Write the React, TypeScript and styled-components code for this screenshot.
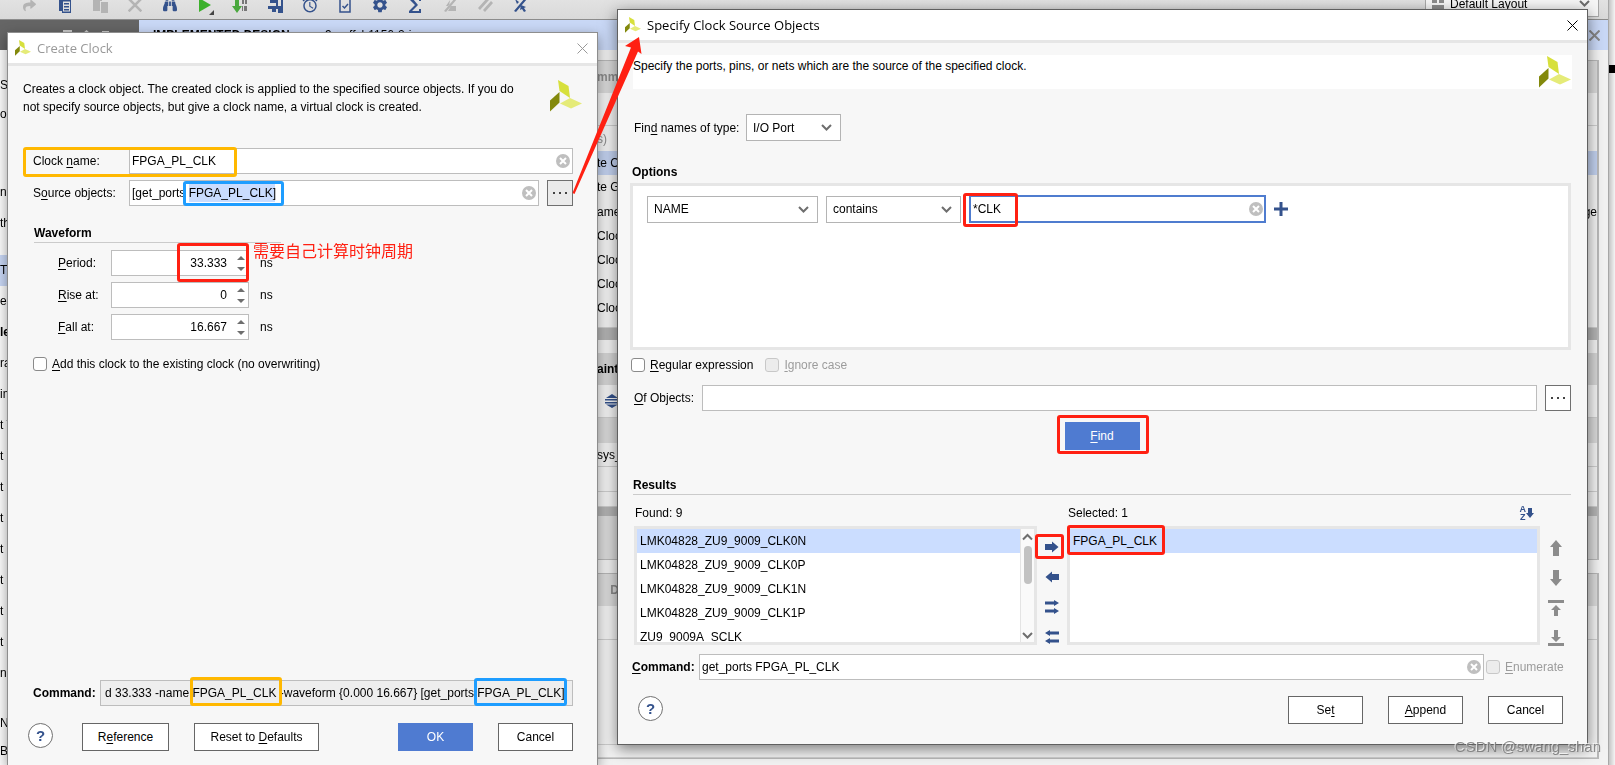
import React from 'react';
import styled, { createGlobalStyle, css } from 'styled-components';
import { FaBinoculars, FaShare, FaPlay } from 'react-icons/fa';
import { MdSettings, MdAlarm } from 'react-icons/md';

const RED = '#ff2012';
const YELLOW = '#ffb800';
const BLUE = '#1e9dff';
const NAVY = '#34528c';

const GlobalStyle = createGlobalStyle`
  * { box-sizing: border-box; }
  body {
    margin: 0;
    overflow: hidden;
    background: #fff;
    color: #000;
    font: 12px/18px "Liberation Sans", Arial, "Noto Sans CJK SC", sans-serif;
  }
  button, input, select { font: inherit; color: inherit; }
  u { text-decoration: underline; text-underline-offset: 2px; }
`;

/* ---------- application behind the dialogs ---------- */

const Screen = styled.main`
  position: relative;
  display: flex;
  height: 100vh;
  overflow: hidden;
`;

const AppWindow = styled.div`
  flex: 1;
  min-width: 0;
  display: flex;
  flex-direction: column;
  background: #f2f2f2;
  border-right: 1px solid #a8a8a8;
`;

const Toolbar = styled.div`
  display: flex;
  justify-content: space-between;
  height: 20px;
  background: linear-gradient(#e2e2e2, #d9d9d9);
  border-bottom: 1px solid #8c8c8c;
  overflow: hidden;
`;

const ToolIcons = styled.div`
  display: flex;
  align-items: center;
  height: 10px;
  padding-left: 12px;
`;

const ToolButton = styled.button<{ $color?: string }>`
  display: flex;
  align-items: center;
  justify-content: center;
  width: 35px;
  height: 24px;
  padding: 0;
  border: 0;
  background: none;
  color: ${(p) => p.$color || NAVY};
  svg { display: block; }
`;

const LayoutPicker = styled.div`
  display: flex;
  align-items: center;
  gap: 6px;
  width: 174px;
  height: 17px;
  margin-right: 9px;
  padding: 0 8px 8px 6px;
  border: solid #a8a8a8;
  border-width: 0 1px 1px;
  background: #f6f6f6;
  color: #8c8c8c;
  span { flex: 1; color: #000; }
`;

const Band = styled.div`
  display: flex;
  height: 30px;
`;

const BandDark = styled.div`
  display: flex;
  align-items: center;
  gap: 10px;
  width: 139px;
  padding-left: 63px;
  background: #656565;
  color: #c8c8c8;
`;

const BandTitle = styled.div`
  flex: 1;
  display: flex;
  align-items: center;
  justify-content: space-between;
  padding: 0 8px 0 14px;
  background: #c9d8f6;
  svg { color: #868686; }
`;

const Main = styled.div`
  flex: 1;
  display: flex;
  min-height: 0;
`;

const Sidebar = styled.div`
  width: 139px;
  overflow: hidden;
  background: #fdfdfd;
  white-space: pre;
`;

const SideRow = styled.div<{ $bold?: boolean; $active?: boolean; $gap?: number }>`
  height: 31px;
  line-height: 31px;
  margin-top: ${(p) => p.$gap || 0}px;
  font-weight: ${(p) => (p.$bold ? 700 : 400)};
  background: ${(p) => (p.$active ? '#c9d8f6' : 'none')};
`;

const Content = styled.div`
  flex: 1;
  display: flex;
  flex-direction: column;
  gap: 13px;
  padding: 10px 9px 0 440px;
`;

const Panel = styled.div`
  border: 1px solid #b8b8b8;
  border-right-width: 2px;
  background: #f4f4f4;
`;

const Strip = styled.div<{ $h: number; $bg?: string; $bold?: boolean; $muted?: boolean; $line?: boolean }>`
  display: flex;
  align-items: center;
  justify-content: space-between;
  height: ${(p) => p.$h}px;
  padding: 0 0 0 17px;
  overflow: hidden;
  white-space: pre;
  background: ${(p) => p.$bg || 'none'};
  color: ${(p) => (p.$muted ? '#8c8c8c' : '#000')};
  font-weight: ${(p) => (p.$bold ? 700 : 400)};
  ${(p) => p.$line && css`border-bottom: 1px solid #cfcfcf;`}
`;

const PageEdge = styled.div`
  width: 6px;
  display: flex;
  flex-direction: column;
  overflow: hidden;
  background: linear-gradient(90deg, #c4c4c4, #f4f4f4);
  i { display: block; height: 8px; margin-top: 65px; background: #000; }
`;

/* ---------- dialogs ---------- */

const Dialog = styled.section<{ $front?: boolean }>`
  position: absolute;
  display: flex;
  flex-direction: column;
  background: #f7f7f7;
  ${(p) =>
    p.$front
      ? css`
          top: 9px;
          left: 617px;
          right: 27px;
          border: 1px solid #606060;
          box-shadow: 0 4px 14px rgba(0, 0, 0, 0.5);
        `
      : css`
          top: 32px;
          left: 7px;
          bottom: 0;
          width: 591px;
          border: solid #8e8e8e;
          border-width: 1px 1px 0;
          box-shadow: 0 4px 12px rgba(0, 0, 0, 0.4);
        `}
`;

const TitleBar = styled.header<{ $muted?: boolean }>`
  display: flex;
  align-items: center;
  height: 33px;
  padding: 0 9px 0 7px;
  border-bottom: 3px solid #e6e6e6;
  background: #fff;
  color: ${(p) => (p.$muted ? '#999' : '#000')};
  h1 {
    flex: 1;
    margin: 0 0 0 6px;
    font: 400 13px/18px "Open Sans", "Noto Sans", sans-serif;
  }
`;

const PlainButton = styled.button`
  display: flex;
  align-items: center;
  justify-content: center;
  padding: 0;
  border: 0;
  background: none;
`;

const Body = styled.div<{ $pad: string }>`
  flex: 1;
  display: flex;
  flex-direction: column;
  padding: ${(p) => p.$pad};
`;

const Intro = styled.div`
  display: flex;
  justify-content: space-between;
  height: 68px;
  margin-right: -9px;
  p { width: 504px; margin: 0; }
`;

const Banner = styled.div`
  display: flex;
  justify-content: space-between;
  align-items: flex-start;
  height: 34px;
  margin: 0 -1px 25px 3px;
  padding: 1px 1px 0 0;
  background: #fff;
  p { margin: 1px 0 0; }
`;

const Row = styled.div<{ $top?: number; $indent?: number; $gap?: number }>`
  position: relative;
  display: flex;
  align-items: center;
  gap: ${(p) => p.$gap || 0}px;
  margin-top: ${(p) => p.$top || 0}px;
  padding-left: ${(p) => p.$indent || 0}px;
`;

const Label = styled.label<{ $w?: number; $bold?: boolean }>`
  width: ${(p) => (p.$w ? `${p.$w}px` : 'auto')};
  font-weight: ${(p) => (p.$bold ? 700 : 400)};
  white-space: nowrap;
`;

const Field = styled.div<{ $w?: number }>`
  position: relative;
  flex: ${(p) => (p.$w ? `0 0 ${p.$w}px` : 1)};
  display: flex;
  min-width: 0;
`;

const TextInput = styled.input<{ $focus?: boolean; $right?: boolean }>`
  position: relative;
  width: 100%;
  height: ${(p) => (p.$focus ? 28 : 26)}px;
  padding: ${(p) => (p.$right ? '0 21px 0 2px' : '0 2px')};
  border: ${(p) => (p.$focus ? '2px solid #4f7ccf' : '1px solid #bdbdbd')};
  border-radius: 0;
  outline: none;
  background: #fff;
  text-align: ${(p) => (p.$right ? 'right' : 'left')};
  &:read-only { padding: 0 4px; background: #eee; }
`;

const SelectedText = styled.span`
  position: absolute;
  top: 4px;
  left: 60px;
  width: 86px;
  height: 18px;
  background: #c9dcfe;
  mix-blend-mode: multiply;
  pointer-events: none;
`;

const ClearButton = styled(PlainButton)`
  position: absolute;
  top: 0;
  bottom: 0;
  right: 3px;
`;

const Spinner = styled.span`
  position: absolute;
  top: 3px;
  right: 3px;
  display: flex;
  flex-direction: column;
  gap: 2px;
  button { width: 10px; height: 9px; color: #6e6e6e; }
`;

const Picker = styled.div<{ $w: number }>`
  position: relative;
  width: ${(p) => p.$w}px;
  select {
    display: block;
    width: 100%;
    height: 27px;
    padding: 0 6px;
    appearance: none;
    border: 1px solid #b4b4b4;
    border-radius: 0;
    background: #fff;
  }
  svg { position: absolute; right: 9px; top: 10px; pointer-events: none; }
`;

const Check = styled.input`
  appearance: none;
  width: 14px;
  height: 14px;
  margin: 0 5px 0 0;
  border: 1px solid #8a8a8a;
  border-radius: 3px;
  background: #fff;
  &:disabled { border-color: #c8c8c8; background: #ececec; }
`;

const CheckLabel = styled.label<{ $off?: boolean; $w?: number }>`
  display: flex;
  align-items: center;
  width: ${(p) => (p.$w ? `${p.$w}px` : 'auto')};
  white-space: nowrap;
  color: ${(p) => (p.$off ? '#9c9c9c' : '#000')};
`;

const Button = styled.button<{ $w: number; $primary?: boolean }>`
  width: ${(p) => p.$w}px;
  height: 28px;
  padding: 0;
  border: 1px solid ${(p) => (p.$primary ? '#4f7bd1' : '#666')};
  background: ${(p) => (p.$primary ? '#4f7bd1' : '#fff')};
  color: ${(p) => (p.$primary ? '#fff' : '#000')};
`;

const DotsButton = styled.button<{ $pressed?: boolean }>`
  display: flex;
  align-items: center;
  justify-content: center;
  width: 26px;
  height: 26px;
  padding: 0;
  border: 1px solid #707070;
  background: ${(p) => (p.$pressed ? '#ebebeb' : '#fff')};
`;

const HelpButton = styled.button`
  align-self: flex-start;
  width: 25px;
  height: 25px;
  padding: 0;
  border: 1px solid #707070;
  border-radius: 50%;
  background: #fff;
  color: ${NAVY};
  font-size: 15px;
  font-weight: 700;
  line-height: 20px;
`;

const Heading = styled.h2<{ $top: number; $rule?: boolean; $w?: number; $indent?: number }>`
  margin: ${(p) => p.$top}px 0 0 ${(p) => p.$indent || 0}px;
  width: ${(p) => (p.$w ? `${p.$w}px` : 'auto')};
  font-size: 12px;
  line-height: 18px;
  font-weight: 700;
  ${(p) => p.$rule && css`border-bottom: 1px solid #cbcbcb;`}
`;

const Spacer = styled.div`
  flex: 1;
`;

const OptionsBox = styled.div`
  height: 167px;
  margin-top: 2px;
  padding: 9px 14px;
  border: 3px solid #e6e6e6;
  background: #fff;
`;

const FindRow = styled.div`
  display: flex;
  justify-content: center;
  margin-top: 11px;
  padding-left: 3px;
`;

const Results = styled.div`
  display: grid;
  grid-template-columns: 403fr 30px 473fr 31px;
  margin: 9px 0 0 4px;
  row-gap: 4px;
`;

const Caption = styled.div`
  display: flex;
  justify-content: space-between;
  padding: 0 6px 0 1px;
`;

const ListBox = styled.div`
  position: relative;
  display: flex;
  height: 119px;
  border: 3px solid #e6e6e6;
  background: #fff;
  ul {
    flex: 1;
    margin: 0;
    padding: 0;
    overflow: hidden;
    list-style: none;
  }
`;

const Item = styled.li<{ $on?: boolean }>`
  height: 24px;
  padding-left: 3px;
  line-height: 24px;
  background: ${(p) => (p.$on ? '#cbddff' : 'none')};
`;

const ScrollTrack = styled.div`
  display: flex;
  flex-direction: column;
  align-items: center;
  width: 14px;
  padding: 4px 0 2px;
  border-left: 1px solid #e4e4e4;
  background: #fafafa;
  i {
    width: 8px;
    height: 38px;
    margin: 5px 0 auto;
    border-radius: 4px;
    background: #c2c2c2;
  }
`;

const IconColumn = styled.div<{ $color: string; $top: number }>`
  position: relative;
  display: flex;
  flex-direction: column;
  align-items: center;
  gap: 14px;
  padding-top: ${(p) => p.$top}px;
  color: ${(p) => p.$color};
  button { height: 16px; color: inherit; }
`;

const SortIcon = styled(PlainButton)`
  color: ${NAVY};
  font-size: 9px;
  font-weight: 700;
  line-height: 8px;
  span { display: flex; flex-direction: column; }
`;

const FooterRow = styled.div`
  display: flex;
  gap: 25px;
  margin-top: 16px;
  padding: 0 8px;
`;

/* ---------- annotations laid over the screens ---------- */

const Mark = styled.div<{ $x: number; $y: number; $w: number; $h: number; $color: string }>`
  position: absolute;
  left: ${(p) => p.$x}px;
  top: ${(p) => p.$y}px;
  width: ${(p) => p.$w}px;
  height: ${(p) => p.$h}px;
  border: 3px solid ${(p) => p.$color};
  border-radius: 3px;
  pointer-events: none;
`;

const Note = styled.p`
  position: absolute;
  top: -12px;
  left: 230px;
  margin: 0;
  color: ${RED};
  font: 16px/24px "Noto Sans CJK SC", sans-serif;
  white-space: nowrap;
`;

const Arrow = styled.svg`
  position: absolute;
  left: 572px;
  top: 36px;
`;

const Watermark = styled.div`
  position: absolute;
  right: 14px;
  bottom: 6px;
  color: rgba(120, 120, 120, 0.85);
  font-size: 15px;
  line-height: 24px;
  text-shadow: -1px -1px 0 rgba(255, 255, 255, 0.7);
`;

/* ---------- drawings ---------- */

const Logo = ({ size }: { size: number }) => (
  <svg width={size} height={size} viewBox="0 0 32 32" aria-hidden="true">
    <path d="M8 0L18.5 6L20 18L9.5 11z" fill="#d7e03c" />
    <path d="M0 20.5L9.5 12V22.5L0 31.5z" fill="#83890c" />
    <path d="M10 23.5L20 18L32 23.5L21 28.5z" fill="#e5eb78" />
  </svg>
);

const Cross = ({ size = 11, width = 1 }: { size?: number; width?: number }) => (
  <svg width={size} height={size} viewBox="0 0 11 11" fill="none" stroke="currentColor" strokeWidth={width}>
    <path d="M.5.5l10 10M10.5.5l-10 10" />
  </svg>
);

const Chevron = ({ d = 'M1 1l4.500 4.500L10 1' }: { d?: string }) => (
  <svg width="11" height="8" viewBox="0 0 11 8" fill="none" stroke="#6e6e6e" strokeWidth="2">
    <path d={d} />
  </svg>
);
const UP = 'M1 6.500l4.500-4.500L10 6.500';

const Dots = () => (
  <svg width="14" height="3" viewBox="0 0 14 3" fill="#444">
    <path d="M0 0h2v2H0zM6 0h2v2H6zM12 0h2v2h-2z" />
  </svg>
);

const Clear = () => (
  <ClearButton aria-label="Clear">
    <svg width="14" height="14" viewBox="0 0 14 14">
      <circle cx="7" cy="7" r="7" fill="#bfbfbf" />
      <path d="M4 4l6 6M10 4l-6 6" stroke="#fff" strokeWidth="2" />
    </svg>
  </ClearButton>
);

const Shape = ({ d, w = 16, h = 16 }: { d: string; w?: number; h?: number }) => (
  <svg width={w} height={h} viewBox={`0 0 ${w} ${h}`} fill="currentColor">
    <path d={d} />
  </svg>
);

const RIGHT = 'M1 5h7V2.500l6.500 5.500L8 13.500V11H1z';
const LEFT = 'M15 5H8V2.500L1.500 8 8 13.500V11h7z';
const RIGHT_ALL = 'M1 2.500h9V1l5 3-5 3V5.500H1zM1 10.500h9V9l5 3-5 3v-1.500H1z';
const LEFT_ALL = 'M15 2.500H6V1L1 4l5 3V5.500h9zM15 10.500H6V9l-5 3 5 3v-1.500h9z';
const MOVE_UP = 'M8 0l6 7h-3v9H5V7H2z';
const MOVE_DOWN = 'M8 16l6-7h-3V0H5v9H2z';
const MOVE_TOP = 'M0 0h16v3H0zM8 5l5 5H10v6H6v-6H3z';
const MOVE_BOTTOM = 'M0 13h16v3H0zM8 12l5-5H10V0H6v7H3z';

/* ---------- parts ---------- */

const SpinField = ({ id, value }: { id: string; value: string }) => (
  <Field $w={138}>
    <TextInput id={id} $right defaultValue={value} />
    <Spinner>
      <PlainButton aria-label="Increase">
        <Shape w={8} h={4} d="M4 0l4 4H0z" />
      </PlainButton>
      <PlainButton aria-label="Decrease">
        <Shape w={8} h={4} d="M0 0h8L4 4z" />
      </PlainButton>
    </Spinner>
  </Field>
);

const sideRows: { text: string; bold?: boolean; active?: boolean; gap?: number }[] = [
  { text: 'S', gap: 20 },
  { text: 'oc', gap: -2 },
  { text: 'ne', gap: 47 },
  { text: 'th' },
  { text: 'Ti', active: true, gap: 16 },
  { text: 'er' },
  { text: 'le', bold: true },
  { text: 'ra' },
  { text: 'im' },
  { text: 't T' },
  { text: 't C' },
  { text: 't C' },
  { text: 't P' },
  { text: 't P' },
  { text: 't P' },
  { text: 't U' },
  { text: 't P' },
  { text: 'na' },
  { text: 'ND', gap: 19 },
  { text: 'B', gap: -3 },
];

const Background = () => (
  <>
    <AppWindow>
      <Toolbar>
        <ToolIcons>
          <ToolButton aria-label="Redo" $color="#b4b4b4"><FaShare size={13} /></ToolButton>
          <ToolButton aria-label="Report"><Shape d="M2 0h10v3h2v13H5v-2H2zM6 4.500v10h7v-10zM7 6h5v1.500H7zM7 9h5v1.500H7zM7 12h5v1.500H7z" /></ToolButton>
          <ToolButton aria-label="Paste" $color="#b4b4b4"><Shape d="M1 0h9v4H8v10H1zM9 5h7v11H9z" /></ToolButton>
          <ToolButton aria-label="Delete" $color="#b4b4b4"><Cross size={14} width={2} /></ToolButton>
          <ToolButton aria-label="Find"><FaBinoculars size={14} /></ToolButton>
          <ToolButton aria-label="Run" $color="#3cb02c">
            <svg width="18" height="22" viewBox="0 0 18 22">
              <path d="M3 4l12 7-12 7z" fill="currentColor" />
              <path d="M18 16v5h-5z" fill="#444" />
            </svg>
          </ToolButton>
          <ToolButton aria-label="Bitstream" $color="#4aa83e">
            <svg width="16" height="16" viewBox="0 0 16 16">
              <path d="M3 0h4v9h3l-5 7-5-7h3z" fill="currentColor" />
              <path d="M10 2h2v5h-2zM13 2h2v5h-2zM10 9h1v5h-1zM12 9h3v5h-3z" fill="#777" />
            </svg>
          </ToolButton>
          <ToolButton aria-label="Hardware"><Shape d="M3 0h13v16h-5v-4H9v3H5v-3H1V9h8V6H3zM11 3v6h3V3z" /></ToolButton>
          <ToolButton aria-label="Timing"><MdAlarm size={18} /></ToolButton>
          <ToolButton aria-label="Methodology">
            <svg width="16" height="16" viewBox="0 0 16 16" fill="none" stroke="currentColor" strokeWidth="2">
              <path d="M3 1h10v14H3z" strokeWidth="1.500" />
              <path d="M5.500 9l2 2 3.500-4" strokeWidth="1.500" />
            </svg>
          </ToolButton>
          <ToolButton aria-label="Settings"><MdSettings size={18} /></ToolButton>
          <ToolButton aria-label="Summary"><Shape d="M2 0h12v4h-2V2H6l5 6-6 6h7v-2h2v4H2v-2l6-6-6-6z" /></ToolButton>
          <ToolButton aria-label="Schematic" $color="#b4b4b4"><Shape d="M2 14L13 1l2 1L4 15zM8 3l-4 6h3zM9 9h5v5H6z" /></ToolButton>
          <ToolButton aria-label="Highlight" $color="#b4b4b4"><Shape d="M1 11L10 1l2 2-9 10zM6 13l8-9 2 2-8 9z" /></ToolButton>
          <ToolButton aria-label="Unselect"><Shape d="M2 14L13 1l2 1L4 15zM3 2l4 3-2 2zM9 8l5 2-2 1 2 3-2 1-2-3-2 1z" /></ToolButton>
        </ToolIcons>
        <LayoutPicker>
          <Shape w={12} h={10} d="M0 0h5v4H0zM7 0h5v4H7zM0 6h12v4H0z" />
          <span>Default Layout</span>
          <Chevron />
        </LayoutPicker>
      </Toolbar>
      <Band>
        <BandDark>
          <Shape w={9} h={10} d="M0 0h9v2L5 6v4H4V6L0 2z" />
          <Shape w={9} h={10} d="M4.500 0L9 4H0zM0 6h9L4.500 10z" />
          <Shape w={9} h={10} d="M1 1h7v3H6v2H3V3H1zM3 8h3v2H3z" />
        </BandDark>
        <BandTitle>
          <span><b>IMPLEMENTED DESIGN</b> - xczu9eg-ffvb1156-2-i</span>
          <Cross size={11} width={2} />
        </BandTitle>
      </Band>
      <Main>
        <Sidebar>
          {sideRows.map((r, i) => (
            <SideRow key={i} $bold={r.bold} $active={r.active} $gap={r.gap}>{r.text}</SideRow>
          ))}
        </Sidebar>
        <Content>
          <Panel>
            <Strip $h={32} $bg="#dadada" $bold $muted>mma</Strip>
            <Strip $h={33} $line />
            <Strip $h={25} $muted>s)</Strip>
            <Strip $h={24} $bg="#c3d2f0">te C</Strip>
            <Strip $h={24}>te G</Strip>
            <Strip $h={25}><span>ame</span><span>ge</span></Strip>
            <Strip $h={24}>Cloc</Strip>
            <Strip $h={24}>Cloc</Strip>
            <Strip $h={24}>Cloc</Strip>
            <Strip $h={24}>Cloc</Strip>
            <Strip $h={8} $line />
            <Strip $h={12} $bg="#b4b4b4" />
            <Strip $h={13} />
            <Strip $h={32} $bg="#d6d6d6" $bold>aint</Strip>
            <Strip $h={33} $line>
              <svg width="30" height="14" viewBox="0 0 30 14" fill={NAVY}>
                <path d="M15 0l6 4H9zM8 5h14v1.500H8zM8 8h14v1.500H8zM9 10.500h12L15 14z" />
              </svg>
            </Strip>
            <Strip $h={25} $bg="#dadada" />
            <Strip $h={24} $line>sys_</Strip>
            <Strip $h={25} $line />
            <Strip $h={15} $line />
            <Strip $h={9} $bg="#b4b4b4" />
            <Strip $h={43} $bg="#dcdcdc" />
          </Panel>
          <Panel>
            <Strip $h={32} $bg="#dcdcdc" $bold $muted>{'    D'}</Strip>
            <Strip $h={34} $line />
            <Strip $h={105} $line />
            <Strip $h={13} $line />
          </Panel>
        </Content>
      </Main>
    </AppWindow>
    <PageEdge><i /></PageEdge>
  </>
);

const CreateClock = () => (
  <Dialog aria-label="Create Clock">
    <TitleBar $muted>
      <Logo size={16} />
      <h1>Create Clock</h1>
      <PlainButton aria-label="Close"><Cross /></PlainButton>
    </TitleBar>
    <Body $pad="14px 24px 14px 15px">
      <Intro>
        <p>
          Creates a clock object. The created clock is applied to the specified source objects. If you do
          not specify source objects, but give a clock name, a virtual clock is created.
        </p>
        <Logo size={32} />
      </Intro>
      <Row $indent={10}>
        <Label $w={96} htmlFor="clock-name">Clock <u>n</u>ame:</Label>
        <Field>
          <TextInput id="clock-name" defaultValue="FPGA_PL_CLK" />
          <Clear />
        </Field>
        <Mark $x={0} $y={-1} $w={214} $h={30} $color={YELLOW} />
      </Row>
      <Row $top={6} $indent={10}>
        <Label $w={96} htmlFor="source-objects">S<u>o</u>urce objects:</Label>
        <Field>
          <TextInput id="source-objects" defaultValue="[get_ports FPGA_PL_CLK]" />
          <SelectedText />
          <Clear />
          <Mark $x={54} $y={1} $w={101} $h={25} $color={BLUE} />
        </Field>
        <Row $indent={8}>
          <DotsButton $pressed aria-label="Browse source objects"><Dots /></DotsButton>
        </Row>
      </Row>
      <Heading $top={18} $rule $w={247} $indent={11}>Waveform</Heading>
      <Row $top={7} $indent={35}>
        <Label $w={53} htmlFor="period"><u>P</u>eriod:</Label>
        <SpinField id="period" value="33.333" />
        <Row $indent={11}>ns</Row>
        <Mark $x={154} $y={-7} $w={72} $h={39} $color={RED} />
        <Note>需要自己计算时钟周期</Note>
      </Row>
      <Row $top={6} $indent={35}>
        <Label $w={53} htmlFor="rise"><u>R</u>ise at:</Label>
        <SpinField id="rise" value="0" />
        <Row $indent={11}>ns</Row>
      </Row>
      <Row $top={6} $indent={35}>
        <Label $w={53} htmlFor="fall"><u>F</u>all at:</Label>
        <SpinField id="fall" value="16.667" />
        <Row $indent={11}>ns</Row>
      </Row>
      <Row $top={15} $indent={10}>
        <CheckLabel>
          <Check type="checkbox" />
          <span><u>A</u>dd this clock to the existing clock (no overwriting)</span>
        </CheckLabel>
      </Row>
      <Spacer />
      <Row $indent={10}>
        <Label $w={67} $bold htmlFor="command">Command:</Label>
        <Field>
          <TextInput
            id="command"
            readOnly
            value="d 33.333 -name FPGA_PL_CLK -waveform {0.000 16.667} [get_ports FPGA_PL_CLK]"
          />
        </Field>
        <Mark $x={167} $y={-3} $w={92} $h={29} $color={YELLOW} />
        <Mark $x={451} $y={-2} $w={93} $h={28} $color={BLUE} />
      </Row>
      <Row $top={17} $indent={5} $gap={25}>
        <HelpButton aria-label="Help">?</HelpButton>
        <Row $indent={4}><Button $w={87}>R<u>e</u>ference</Button></Row>
        <Button $w={125}>Reset to <u>D</u>efaults</Button>
        <Spacer />
        <Button $w={75} $primary>OK</Button>
        <Button $w={75}>Cancel</Button>
      </Row>
    </Body>
  </Dialog>
);

const found = [
  'LMK04828_ZU9_9009_CLK0N',
  'LMK04828_ZU9_9009_CLK0P',
  'LMK04828_ZU9_9009_CLK1N',
  'LMK04828_ZU9_9009_CLK1P',
  'ZU9_9009A_SCLK',
];

const SpecifySource = () => (
  <Dialog $front aria-label="Specify Clock Source Objects">
    <TitleBar>
      <Logo size={16} />
      <h1>Specify Clock Source Objects</h1>
      <PlainButton aria-label="Close"><Cross /></PlainButton>
    </TitleBar>
    <Body $pad="12px 16px 20px 12px">
      <Banner>
        <p>Specify the ports, pins, or nets which are the source of the specified clock.</p>
        <Logo size={32} />
      </Banner>
      <Row $indent={4}>
        <Label $w={112} htmlFor="type">Fin<u>d</u> names of type:</Label>
        <Picker $w={95}>
          <select id="type"><option>I/O Port</option></select>
          <Chevron />
        </Picker>
      </Row>
      <Heading $top={22} $indent={2}>Options</Heading>
      <OptionsBox>
        <Row $gap={8}>
          <Picker $w={171}>
            <select aria-label="Property"><option>NAME</option></select>
            <Chevron />
          </Picker>
          <Picker $w={135}>
            <select aria-label="Operator"><option>contains</option></select>
            <Chevron />
          </Picker>
          <Field $w={297}>
            <TextInput $focus aria-label="Pattern" defaultValue="*CLK" />
            <Clear />
            <Mark $x={-6} $y={-2} $w={55} $h={34} $color={RED} />
          </Field>
          <PlainButton aria-label="Add condition">
            <svg width="14" height="14" viewBox="0 0 14 14" stroke={NAVY} strokeWidth="3">
              <path d="M7 0v14M0 7h14" />
            </svg>
          </PlainButton>
        </Row>
      </OptionsBox>
      <Row $top={6} $indent={1} $gap={12}>
        <CheckLabel>
          <Check type="checkbox" />
          <span><u>R</u>egular expression</span>
        </CheckLabel>
        <CheckLabel $off>
          <Check type="checkbox" disabled />
          <span><u>I</u>gnore case</span>
        </CheckLabel>
      </Row>
      <Row $top={11} $indent={4}>
        <Label $w={68} htmlFor="of-objects"><u>O</u>f Objects:</Label>
        <Field><TextInput id="of-objects" /></Field>
        <Row $indent={8}><DotsButton aria-label="Browse objects"><Dots /></DotsButton></Row>
      </Row>
      <FindRow>
        <Field $w={75}>
          <Button $w={75} $primary><u>F</u>ind</Button>
          <Mark $x={-8} $y={-7} $w={92} $h={39} $color={RED} />
        </Field>
      </FindRow>
      <Heading $top={26} $indent={3} $rule>Results</Heading>
      <Results>
        <Caption>Found: 9</Caption>
        <span />
        <Caption>
          Selected: 1
          <SortIcon aria-label="Sort">
            <span><b>A</b><b>Z</b></span>
            <Shape w={8} h={10} d="M2 0h4v5h2L4 10 0 5h2z" />
          </SortIcon>
        </Caption>
        <span />
        <ListBox>
          <ul>
            {found.map((name, i) => (
              <Item key={name} $on={i === 0}>{name}</Item>
            ))}
          </ul>
          <ScrollTrack>
            <Chevron d={UP} />
            <i />
            <Chevron />
          </ScrollTrack>
        </ListBox>
        <IconColumn $color={NAVY} $top={13}>
          <PlainButton aria-label="Add"><Shape d={RIGHT} /></PlainButton>
          <PlainButton aria-label="Remove"><Shape d={LEFT} /></PlainButton>
          <PlainButton aria-label="Add all"><Shape d={RIGHT_ALL} /></PlainButton>
          <PlainButton aria-label="Remove all"><Shape d={LEFT_ALL} /></PlainButton>
          <Mark $x={-2} $y={8} $w={29} $h={25} $color={RED} />
        </IconColumn>
        <ListBox>
          <ul><Item $on>FPGA_PL_CLK</Item></ul>
          <Mark $x={-3} $y={-4} $w={98} $h={30} $color={RED} />
        </ListBox>
        <IconColumn $color="#8c8c8c" $top={14}>
          <PlainButton aria-label="Move up"><Shape d={MOVE_UP} /></PlainButton>
          <PlainButton aria-label="Move down"><Shape d={MOVE_DOWN} /></PlainButton>
          <PlainButton aria-label="Move to top"><Shape d={MOVE_TOP} /></PlainButton>
          <PlainButton aria-label="Move to bottom"><Shape d={MOVE_BOTTOM} /></PlainButton>
        </IconColumn>
      </Results>
      <Row $top={8} $indent={2}>
        <Label $w={67} $bold htmlFor="get-command"><u>C</u>ommand:</Label>
        <Field>
          <TextInput id="get-command" defaultValue="get_ports FPGA_PL_CLK" />
          <Clear />
        </Field>
        <Row $indent={2}>
          <CheckLabel $off $w={85}>
            <Check type="checkbox" disabled />
            <span><u>E</u>numerate</span>
          </CheckLabel>
        </Row>
      </Row>
      <FooterRow>
        <HelpButton aria-label="Help">?</HelpButton>
        <Spacer />
        <Button $w={75}>Se<u>t</u></Button>
        <Button $w={75}><u>A</u>ppend</Button>
        <Button $w={75}>Cancel</Button>
      </FooterRow>
    </Body>
  </Dialog>
);

export default function App() {
  return (
    <Screen>
      <GlobalStyle />
      <Background />
      <CreateClock />
      <SpecifySource />
      <Arrow width="72" height="160" viewBox="572 36 72 160" fill={RED} aria-hidden="true">
        <path d="M639 37L625 46L631 47.500L572.500 193L574.500 194L638 51.500L641.500 54z" />
      </Arrow>
      <Watermark>CSDN @swang_shan</Watermark>
    </Screen>
  );
}
